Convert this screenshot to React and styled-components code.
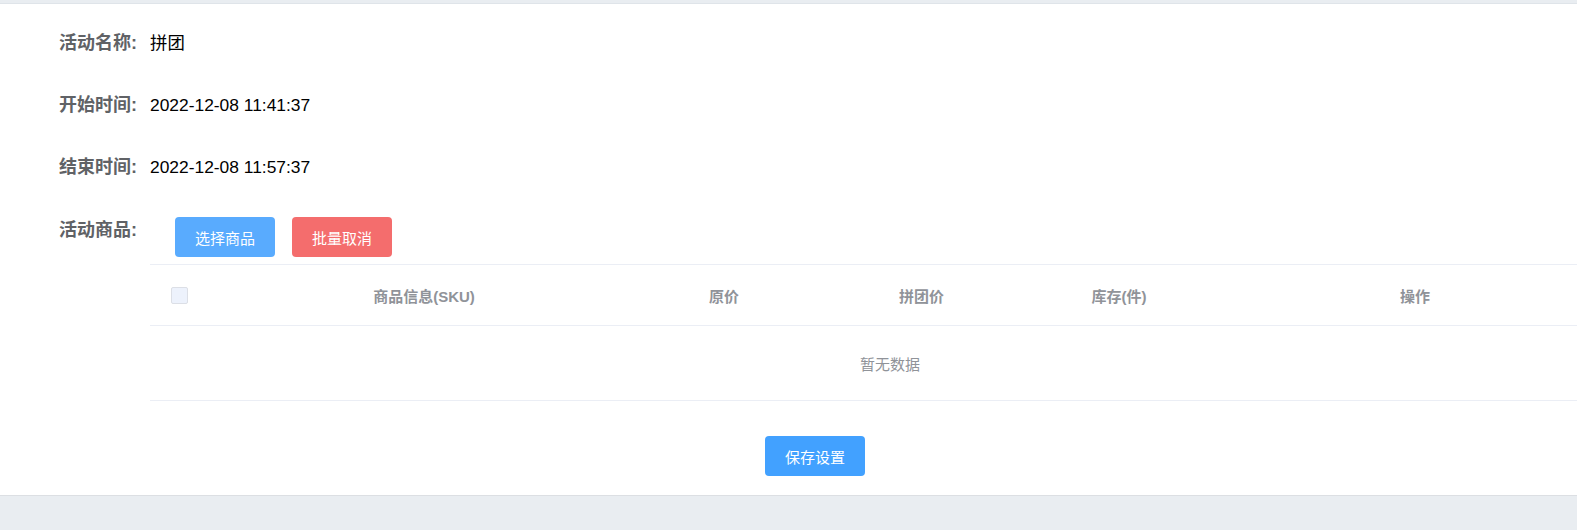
import React from 'react'
import styled, { createGlobalStyle } from 'styled-components'

const GlobalStyle = createGlobalStyle`
    html, body {
        margin: 0;
        padding: 0;
        background: #e9edf1;
        overflow: hidden;
    }
    body {
        font-family: "Liberation Sans", "Noto Sans CJK SC", sans-serif;
    }
`

// page frame
const Page = styled.div`
    width: 1630px;
    padding-top: 3px;
    min-height: 530px;
    background: #e9edf1;
`
const Panel = styled.section`
    background: #fff;
    border-top: 1px solid #dfe4e9;
    border-bottom: 1px solid #dcdfe3;
    padding: 21px 0 19px;
`

// form rows
const FormRow = styled.div`
    display: flex;
    align-items: flex-start;
    padding-left: 59px;
    margin-bottom: ${p => (p.last ? 0 : 26)}px;
`
const Label = styled.label`
    width: 91px;
    flex-shrink: 0;
    font-size: 18px;
    line-height: 36px;
    font-weight: bold;
    color: #606266;
    padding-top: ${p => (p.last ? 1 : 0)}px;
`
const Value = styled.div`
    font-size: 17.4px;
    line-height: 36px;
    color: #000;
`
const Content = styled.div`
    flex: 1;
    display: flex;
    flex-direction: column;
`
const Actions = styled.div`
    display: flex;
    gap: 17px;
    margin: 6px 0 7px 25px;
`
const Button = styled.button`
    width: 100px;
    height: 40px;
    border: none;
    border-radius: 4px;
    background: ${p => p.color};
    color: #fff;
    font-family: inherit;
    font-size: 15px;
    cursor: pointer;
`

// goods table
const Table = styled.div`
    border-top: 1px solid #ebeef5;
    border-bottom: 1px solid #ebeef5;
`
const HeadRow = styled.div`
    display: grid;
    grid-template-columns: 55px 438px 162px 233px 162px 1fr;
    height: 60px;
    align-items: center;
    border-bottom: 1px solid #ebeef5;
`
const HeadCell = styled.div`
    text-align: center;
    font-size: 15px;
    font-weight: bold;
    color: #909399;
`
const Checkbox = styled.span`
    display: block;
    width: 15px;
    height: 15px;
    margin-left: 21px;
    border: 1px solid #dcdfe6;
    border-radius: 2px;
    background: #edf2fc;
`
const Empty = styled.div`
    height: 74px;
    display: flex;
    align-items: center;
    justify-content: center;
    font-size: 15px;
    color: #909399;
`
const Footer = styled.div`
    display: flex;
    justify-content: center;
    padding-top: 35px;
`

const columns = ['商品信息(SKU)', '原价', '拼团价', '库存(件)', '操作']

const App = () => {
    return (
        <Page>
            <GlobalStyle />
            <Panel>
                <FormRow>
                    <Label>活动名称:</Label>
                    <Value>拼团</Value>
                </FormRow>
                <FormRow>
                    <Label>开始时间:</Label>
                    <Value>2022-12-08 11:41:37</Value>
                </FormRow>
                <FormRow>
                    <Label>结束时间:</Label>
                    <Value>2022-12-08 11:57:37</Value>
                </FormRow>
                <FormRow last>
                    <Label last>活动商品:</Label>
                    <Content>
                        <Actions>
                            <Button color="#59abfe">选择商品</Button>
                            <Button color="#f46d6d">批量取消</Button>
                        </Actions>
                        <Table>
                            <HeadRow>
                                <Checkbox />
                                {columns.map(c => (
                                    <HeadCell key={c}>{c}</HeadCell>
                                ))}
                            </HeadRow>
                            <Empty>暂无数据</Empty>
                        </Table>
                    </Content>
                </FormRow>
                <Footer>
                    <Button color="#42a1ff">保存设置</Button>
                </Footer>
            </Panel>
        </Page>
    )
}

export default App
